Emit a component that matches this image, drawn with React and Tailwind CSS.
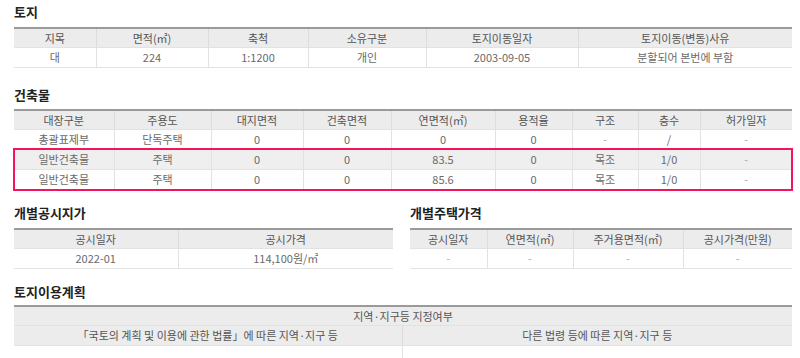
import React from "react";

const font = { fontFamily: '"Noto Sans CJK KR", "Noto Sans", sans-serif' };

function Title({ children, className = "" }) {
  return (
    <div className={"text-[13px] leading-[16px] font-bold text-[#222] " + className}>
      {children}
    </div>
  );
}

function Table({ cols, head, rows, className = "", rowBg = [] }) {
  return (
    <table className={"table-fixed border-collapse border-t-2 border-t-[#9a9a9a] text-[11px] " + className}>
      <colgroup>
        {cols.map((w, i) => (
          <col key={i} style={{ width: w }} />
        ))}
      </colgroup>
      <thead>
        <tr className="bg-[#ececec]">
          {head.map((h, i) => (
            <th
              key={i}
              className="h-[19px] p-0 font-normal text-[#555] border-b border-b-[#e2e2e2] border-l border-l-[#dcdcdc] first:border-l-0 text-center leading-[18px]"
            >
              {h}
            </th>
          ))}
        </tr>
      </thead>
      <tbody>
        {rows.map((r, ri) => (
          <tr key={ri} className={rowBg[ri] || "bg-white"}>
            {r.map((c, ci) => (
              <td
                key={ci}
                className={
                  "h-[20px] p-0 text-center leading-[19px] border-b border-b-[#e2e2e2] border-l border-l-[#e2e2e2] first:border-l-0 " +
                  (c === "-" ? "text-[#aaa]" : "text-[#6a6a6a]")
                }
              >
                {c}
              </td>
            ))}
          </tr>
        ))}
      </tbody>
    </table>
  );
}

export default function App() {
  return (
    <div className="w-[800px] h-[358px] overflow-hidden bg-white pl-[14px] pr-[8px] pt-[4px]" style={font}>
      <Title className="mb-[7px]">토지</Title>
      <Table
        className="w-[778px]"
        cols={[82, 112, 100, 118, 152, 214]}
        head={["지목", "면적(㎡)", "축척", "소유구분", "토지이동일자", "토지이동(변동)사유"]}
        rows={[["대", "224", "1:1200", "개인", "2003-09-05", "분할되어 본번에 부함"]]}
      />

      <Title className="mt-[19px] mb-[6px]">건축물</Title>
      <div className="relative w-[778px]">
        <Table
          className="w-[778px]"
          cols={[100, 97, 92, 88, 104, 77, 66, 62, 92]}
          head={["대장구분", "주용도", "대지면적", "건축면적", "연면적(㎡)", "용적율", "구조", "층수", "허가일자"]}
          rows={[
            ["총괄표제부", "단독주택", "0", "0", "0", "0", "-", "/", "-"],
            ["일반건축물", "주택", "0", "0", "83.5", "0", "목조", "1/0", "-"],
            ["일반건축물", "주택", "0", "0", "85.6", "0", "목조", "1/0", "-"],
          ]}
          rowBg={["bg-white", "bg-[#efefef]", "bg-white"]}
        />
        <div className="absolute left-[-1px] right-[-1px] top-[39px] h-[43px] border-2 border-[#f5145c] pointer-events-none" />
      </div>

      <div className="flex mt-[15px]">
        <div className="w-[379px]">
          <Title className="mb-[7px]">개별공시지가</Title>
          <Table
            className="w-[379px]"
            cols={[164, 215]}
            head={["공시일자", "공시가격"]}
            rows={[["2022-01", "114,100원/㎡"]]}
          />
        </div>
        <div className="ml-[17px] w-[382px]">
          <Title className="mb-[7px]">개별주택가격</Title>
          <Table
            className="w-[382px]"
            cols={[77, 86, 110, 109]}
            head={["공시일자", "연면적(㎡)", "주거용면적(㎡)", "공시가격(만원)"]}
            rows={[["-", "-", "-", "-"]]}
          />
        </div>
      </div>

      <Title className="mt-[15px] mb-[5px]">토지이용계획</Title>
      <table className="w-[778px] table-fixed border-collapse border-t-2 border-t-[#9a9a9a] text-[11px]">
        <colgroup>
          <col style={{ width: 388 }} />
          <col style={{ width: 390 }} />
        </colgroup>
        <thead>
          <tr className="bg-[#ececec]">
            <th colSpan={2} className="h-[19px] p-0 font-normal text-[#555] border-b border-b-[#e2e2e2] text-center leading-[18px]">
              지역·지구등 지정여부
            </th>
          </tr>
          <tr className="bg-[#ececec]">
            <th className="h-[20px] p-0 font-normal text-[#555] border-b border-b-[#e2e2e2] text-center leading-[19px]">
              「국토의 계획 및 이용에 관한 법률」에 따른 지역·지구 등
            </th>
            <th className="h-[20px] p-0 font-normal text-[#555] border-b border-b-[#e2e2e2] border-l border-l-[#dcdcdc] text-center leading-[19px]">
              다른 법령 등에 따른 지역·지구 등
            </th>
          </tr>
        </thead>
        <tbody>
          <tr className="bg-white">
            <td className="h-[20px] p-0 border-b border-b-[#e2e2e2]"></td>
            <td className="h-[20px] p-0 border-b border-b-[#e2e2e2] border-l border-l-[#e2e2e2]"></td>
          </tr>
        </tbody>
      </table>
    </div>
  );
}
